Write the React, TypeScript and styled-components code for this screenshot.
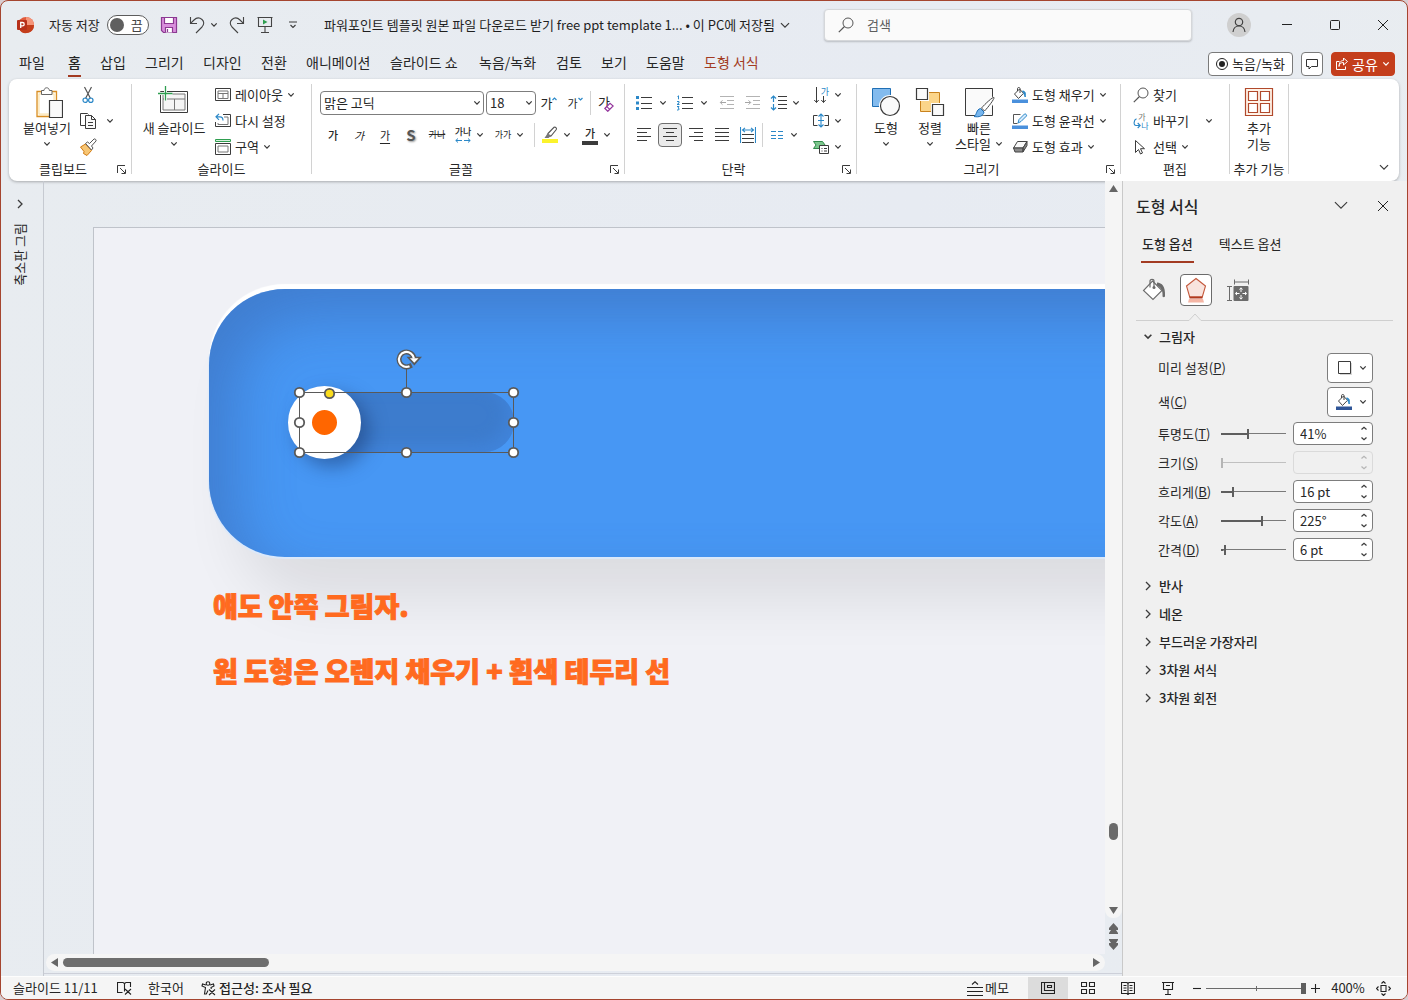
import React from "react";
import styled, { createGlobalStyle, css } from "styled-components";

const GlobalStyle = createGlobalStyle`
  * { box-sizing: border-box; }
  body {
    margin: 0;
    background: #d8cdd0;
    color: #262626;
    font-family: "Noto Sans CJK KR", "Noto Sans", sans-serif;
    font-size: 13px;
    line-height: 16px;
  }
  button, input, select {
    font: inherit;
    color: inherit;
    margin: 0;
    padding: 0;
    border: 0;
    background: none;
  }
  svg { display: block; flex: none; fill: none; }
`;

const INK = "#3b3b3b";
const BLUE = "#2b88c8";
const ACCENT = "#a33b22";

/* ---------- shared parts ---------- */

const AppWindow = styled.div`
  height: 100vh;
  min-height: 700px;
  display: grid;
  grid-template-rows: 48px 30px auto 1fr 23px;
  border: 1px solid #a5452f;
  border-radius: 8px;
  overflow: hidden;
  background: linear-gradient(100deg, #e8ecf0 0%, #e7ebf2 60%, #e9edf0 100%);
`;

const Chevron = ({ size = 8, color = INK }: { size?: number; color?: string }) => (
  <svg width={size} height={size * 0.75} viewBox="0 0 8 6" aria-hidden="true">
    <path d="M1.3 1.4 4 4.1 6.7 1.4" stroke={color} strokeWidth={size > 14 ? 0.5 : size > 10 ? 0.8 : 1.3} />
  </svg>
);

const BareButton = styled.button<{ $w?: number; $h?: number }>`
  display: flex;
  align-items: center;
  justify-content: center;
  flex: none;
  width: ${(p) => (p.$w ? `${p.$w}px` : "auto")};
  height: ${(p) => p.$h ?? 24}px;
  border-radius: 4px;
`;

/* ---------- title bar ---------- */

const TitleBar = styled.header`
  display: flex;
  align-items: center;
`;

const QuickAccess = styled.div`
  display: flex;
  align-items: center;
  gap: 10px;
  flex: none;
  width: 323px;
  padding-left: 14px;
`;

const UndoGroup = styled.div`
  display: flex;
  align-items: center;
  gap: 4px;
`;

const AutoSave = styled.label`
  display: flex;
  align-items: center;
  gap: 7px;
  flex: none;
  width: 101px;
  margin-left: 4px;
  white-space: nowrap;
`;

const Toggle = styled.span`
  position: relative;
  width: 42px;
  height: 20px;
  border: 1px solid #5c5c5c;
  border-radius: 10px;
  background: #fff;
  display: flex;
  align-items: center;
  justify-content: flex-end;
  padding-right: 5px;
  color: #444;
  input {
    position: absolute;
    inset: 0;
    width: 100%;
    height: 100%;
    opacity: 0;
  }
  &::before {
    content: "";
    width: 14px;
    height: 14px;
    border-radius: 50%;
    background: #5f5f5f;
    margin-right: auto;
    margin-left: 2px;
  }
`;

const DocTitle = styled.div`
  flex: 0 0 500px;
  display: flex;
  align-items: center;
  gap: 4px;
  white-space: nowrap;
  color: #1f1f1f;
`;

const SearchBox = styled.label`
  flex: 1 1 200px;
  height: 32px;
  display: flex;
  align-items: center;
  gap: 13px;
  padding-left: 13px;
  margin-right: 35px;
  background: #fafafa;
  border: 1px solid #d5d7da;
  border-radius: 4px;
  box-shadow: 0 1px 2px rgba(0, 0, 0, 0.2);
  input {
    flex: 1;
    min-width: 0;
    outline: none;
  }
  input::placeholder {
    color: #5d5d5d;
    opacity: 1;
  }
`;

const Avatar = styled.button`
  width: 24px;
  height: 24px;
  border-radius: 50%;
  background: #cfcfcf;
  display: grid;
  place-items: center;
  flex: none;
  margin-right: 12px;
`;

/* ---------- ribbon tabs ---------- */

const TabRow = styled.nav`
  display: flex;
  align-items: flex-start;
  padding: 3px 12px 0 18px;
`;

const TabList = styled.div`
  display: flex;
  gap: 19px;
  flex: 1;
`;

const Tab = styled.button<{ $w: number; $active?: boolean; $accent?: boolean }>`
  flex: none;
  min-width: ${(p) => p.$w}px;
  height: 25px;
  text-align: left;
  white-space: nowrap;
  font-size: 14px;
  line-height: 20px;
  padding-bottom: 3px;
  color: ${(p) => (p.$accent ? ACCENT : "#262626")};
  font-weight: ${(p) => (p.$active ? 500 : 400)};
  border-bottom: 2px solid ${(p) => (p.$active ? ACCENT : "transparent")};
  &:first-child {
    margin-right: 4px;
  }
`;

const TabActions = styled.div`
  display: flex;
  gap: 8px;
`;

const ActionButton = styled.button<{ $w: number; $primary?: boolean }>`
  width: ${(p) => p.$w}px;
  height: 24px;
  display: flex;
  align-items: center;
  justify-content: center;
  gap: 4px;
  white-space: nowrap;
  border: 1px solid ${(p) => (p.$primary ? "#c43e1c" : "#7a7a7a")};
  border-radius: 4px;
  background: ${(p) => (p.$primary ? "#c43e1c" : "#fff")};
  color: ${(p) => (p.$primary ? "#fff" : "#262626")};
  font-size: ${(p) => (p.$primary ? 14 : 13)}px;
`;

/* ---------- ribbon ---------- */

const Ribbon = styled.section`
  display: flex;
  height: 102px;
  margin: 0 8px;
  background: #fff;
  border-radius: 8px;
  box-shadow: 0 1px 3px rgba(0, 0, 0, 0.28);
`;

const GroupBox = styled.div<{ $w: number }>`
  flex: none;
  width: ${(p) => p.$w}px;
  padding-top: 3px;
  display: grid;
  grid-template-rows: 78px 18px;
`;

const GroupBody = styled.div<{ $pad?: number }>`
  display: flex;
  padding-left: ${(p) => p.$pad ?? 0}px;
`;

const GroupCaption = styled.div<{ $launcher?: boolean }>`
  display: grid;
  grid-template-columns: ${(p) => (p.$launcher ? "1fr 14px" : "1fr")};
  align-items: center;
  text-align: center;
  white-space: nowrap;
  button {
    width: 9px;
    display: grid;
    place-items: center;
  }
`;

const GroupRule = styled.div`
  flex: none;
  width: 1px;
  margin: 5px 0 7px;
  background: #d2d2d2;
`;

const LineRule = styled.div<{ $gap?: number }>`
  flex: none;
  width: 1px;
  height: 24px;
  margin: 0 ${(p) => p.$gap ?? 2}px;
  background: #d2d2d2;
`;

const BigButton = styled.button<{ $w: number }>`
  flex: none;
  width: ${(p) => p.$w}px;
  padding-top: 4px;
  display: flex;
  flex-direction: column;
  align-items: center;
  gap: 2px;
  white-space: nowrap;
`;

const BigCaption = styled.span`
  display: flex;
  flex-direction: column;
  align-items: center;
  > svg {
    margin-top: 5px;
  }
`;

const TwoLineCaption = styled.span`
  white-space: pre-line;
  text-align: center;
  svg {
    display: inline-block;
    margin-left: 4px;
    vertical-align: 2px;
  }
`;

const Stack = styled.div<{ $left?: number }>`
  display: flex;
  flex-direction: column;
  margin-left: ${(p) => p.$left ?? 0}px;
`;

const RowButton = styled.button`
  height: 26px;
  display: flex;
  align-items: center;
  white-space: nowrap;
  gap: 4px;
`;

const Lines = styled.div`
  display: flex;
  flex-direction: column;
  gap: 8px;
  padding-top: 9px;
`;

const Line = styled.div<{ $gap?: number }>`
  display: flex;
  align-items: center;
  height: 24px;
  gap: ${(p) => p.$gap ?? 0}px;
`;

const SplitBox = styled.button<{ $slot: number; $after: number }>`
  flex: none;
  height: 24px;
  display: grid;
  grid-template-columns: 26px ${(p) => p.$slot}px;
  place-items: center;
  margin-right: ${(p) => p.$after}px;
`;

const ToolButton = styled(BareButton)<{ $selected?: boolean }>`
  width: 26px;
  ${(p) =>
    p.$selected &&
    css`
      width: 24px;
      margin: 0 1px;
      border: 1px solid #6f6f6f;
      background: #ebebeb;
    `}
`;

const Glyph = styled.span<{ $kind?: "bold" | "italic" | "under" | "strike" | "shadow" | "large" }>`
  font-size: ${(p) => (p.$kind === "large" ? 13 : p.$kind === "shadow" ? 15 : p.$kind === "strike" ? 9 : 11)}px;
  font-weight: ${(p) => (p.$kind === "bold" ? 500 : p.$kind === "shadow" ? 700 : 400)};
  font-style: ${(p) => (p.$kind === "italic" ? "italic" : "normal")};
  text-decoration: ${(p) => (p.$kind === "under" ? "underline" : p.$kind === "strike" ? "line-through" : "none")};
  text-underline-offset: 3px;
  text-shadow: ${(p) => (p.$kind === "shadow" ? "1px 1px 2px #999" : "none")};
  color: ${(p) => (p.$kind === "shadow" ? "#555" : "inherit")};
  line-height: 14px;
  white-space: nowrap;
`;

const TinyGlyph = styled.span<{ $strong?: boolean }>`
  font-size: 9px;
  line-height: 10px;
  font-weight: ${(p) => (p.$strong ? 500 : 400)};
  white-space: nowrap;
`;

const MarkedGlyph = styled.span`
  display: flex;
  align-items: flex-start;
  svg {
    margin-top: 1px;
  }
`;

const ErasedGlyph = styled.span`
  display: grid;
  width: 16px;
  height: 17px;
  > * {
    grid-area: 1 / 1;
    justify-self: start;
  }
  svg {
    place-self: end;
  }
`;

const StackedGlyph = styled.span`
  display: flex;
  flex-direction: column;
  align-items: center;
  gap: 1px;
`;

const IconSplit = styled.span`
  display: grid;
  grid-template-columns: 26px 8px;
  place-items: center;
`;

const WideGap = styled.span`
  width: 8px;
`;

const Combo = styled.label<{ $w: number }>`
  flex: none;
  width: ${(p) => p.$w}px;
  height: 24px;
  display: grid;
  align-items: center;
  border: 1px solid #7d7d7d;
  border-radius: 4px;
  background: #fff;
  select {
    grid-area: 1 / 1;
    width: 100%;
    height: 22px;
    padding-left: 3px;
    appearance: none;
    outline: none;
  }
  svg {
    grid-area: 1 / 1;
    justify-self: end;
    margin-right: 2px;
    pointer-events: none;
  }
`;

const CollapseCell = styled.div`
  flex: 1;
  display: flex;
  justify-content: flex-end;
  align-items: flex-end;
  padding: 0 9px 9px 0;
`;

const Split = ({
  label,
  slot = 8,
  after = 0,
  children,
}: {
  label: string;
  slot?: number;
  after?: number;
  children: React.ReactNode;
}) => (
  <SplitBox aria-label={label} $slot={slot} $after={after}>
    {children}
    <Chevron />
  </SplitBox>
);

const Launcher = () => (
  <svg width="9" height="9" viewBox="0 0 9 9" aria-hidden="true">
    <path d="M.5 8V.5H8M3 3l5 5M8.500 4.500v4H4.500" stroke={INK} />
  </svg>
);

const Group = ({
  w,
  caption,
  launcher,
  pad,
  children,
}: {
  w: number;
  caption: string;
  launcher?: boolean;
  pad?: number;
  children: React.ReactNode;
}) => (
  <>
    <GroupBox $w={w}>
      <GroupBody $pad={pad}>{children}</GroupBody>
      <GroupCaption $launcher={launcher}>
        <span>{caption}</span>
        {launcher && (
          <button aria-label={`${caption} 옵션`}>
            <Launcher />
          </button>
        )}
      </GroupCaption>
    </GroupBox>
    <GroupRule />
  </>
);

/* ---------- icons ---------- */

const LogoIcon = () => (
  <svg width="20" height="20" viewBox="0 0 20 20" aria-hidden="true">
    <circle cx="11" cy="10" r="8" fill="#e0593a" />
    <path d="M11 2a8 8 0 0 1 8 8h-8z" fill="#f5957a" />
    <path d="M19 10a8 8 0 0 1-15 4l7-4z" fill="#c43e1c" />
    <rect x="2" y="5" width="10" height="10" rx="1" fill="#b7301a" />
    <path d="M5.700 13V7.500h1.800a1.600 1.600 0 0 1 0 3.400H5.700" stroke="#fff" strokeWidth="1.300" />
  </svg>
);

const SaveIcon = () => (
  <svg width="18" height="18" viewBox="0 0 18 18" aria-hidden="true">
    <path d="M1.500 1.500h15v15h-13l-2-2z" fill="#d98fdc" stroke="#8c3a92" strokeWidth="1.200" />
    <path d="M4.500 1.500h9v6h-9zM5.500 16.500v-5h7v5" fill="#fff" stroke="#8c3a92" strokeWidth="1.200" />
    <path d="M7.500 13v3" stroke="#8c3a92" strokeWidth="1.200" />
  </svg>
);

const UndoIcon = ({ flip }: { flip?: boolean }) => (
  <svg width="18" height="18" viewBox="0 0 18 18" aria-hidden="true">
    <path
      d={
        flip
          ? "M15.500 1v6.500H9M15.200 7.200 12 4C9.500 1.500 6.300 1.500 4 3.500s-2.300 5 0 7.500l6 6"
          : "M2.500 1v6.500H9M2.800 7.200 6 4c2.500-2.500 5.700-2.500 8-.5s2.300 5 0 7.500l-6 6"
      }
      stroke="#444"
      strokeWidth="1.100"
    />
  </svg>
);

const PresentIcon = () => (
  <svg width="16" height="18" viewBox="0 0 16 18" aria-hidden="true">
    <path d="M.5 1.500h15M1.500 1.500v9h13v-9M8 10.500V16M4 16.500h8" stroke="#444" strokeWidth="1.100" />
    <path d="M6 3.500 10.500 6 6 8.500z" fill="#2f9e50" />
  </svg>
);

const MoreIcon = () => (
  <svg width="8" height="8" viewBox="0 0 8 8" aria-hidden="true">
    <path d="M0 1h8M1.500 4 4 6.500 6.500 4" stroke={INK} strokeWidth="1.100" />
  </svg>
);

const SearchIcon = ({ size = 16 }: { size?: number }) => (
  <svg width={size} height={size} viewBox="0 0 16 16" aria-hidden="true">
    <circle cx="10" cy="6" r="5" stroke="#555" />
    <path d="M6.500 9.500.8 15.200" stroke="#555" strokeWidth="1.200" />
  </svg>
);

const PersonIcon = () => (
  <svg width="16" height="16" viewBox="0 0 16 16" aria-hidden="true">
    <circle cx="8" cy="5" r="3.700" stroke="#444" strokeWidth="1.200" />
    <path d="M2 15c.4-3.800 2.800-6 6-6s5.600 2.200 6 6" stroke="#444" strokeWidth="1.200" />
  </svg>
);

const MinimizeIcon = () => (
  <svg width="10" height="10" viewBox="0 0 10 10" aria-hidden="true">
    <path d="M0 4.500h10" stroke="#222" />
  </svg>
);

const MaximizeIcon = () => (
  <svg width="10" height="10" viewBox="0 0 10 10" aria-hidden="true">
    <rect x=".5" y=".5" width="9" height="9" rx="1" stroke="#222" />
  </svg>
);

const CloseIcon = () => (
  <svg width="10" height="10" viewBox="0 0 10 10" aria-hidden="true">
    <path d="m0 0 10 10M10 0 0 10" stroke="#222" />
  </svg>
);

const RecordIcon = () => (
  <svg width="12" height="12" viewBox="0 0 12 12" aria-hidden="true">
    <circle cx="6" cy="6" r="5.500" stroke="#222" />
    <circle cx="6" cy="6" r="3" fill="#222" />
  </svg>
);

const CommentIcon = () => (
  <svg width="12" height="12" viewBox="0 0 12 12" aria-hidden="true">
    <path d="M.5 1.500h11v7h-6l-2.500 2.500v-2.500H.5z" stroke="#333" />
  </svg>
);

const ShareIcon = () => (
  <svg width="12" height="12" viewBox="0 0 12 12" aria-hidden="true">
    <path d="M3.500 3.500h-3v8h9v-3M3 8.500c.4-3 2-4 4.500-4V7l4-3.500-4-3.500v2.500C4.500 2.500 3 5 3 8.500z" stroke="#fff" />
  </svg>
);

const PasteIcon = () => (
  <svg width="32" height="32" viewBox="0 0 32 32" aria-hidden="true">
    <path d="M6 5.500h19.500v25H6z" fill="#fff7e3" stroke="#d98e23" strokeWidth="1.300" />
    <path d="M8 8h15v20H8z" fill="#fff" stroke="#fbe0a6" />
    <path d="M10.500 8.500v-4h2.500c.3-2 1.300-2.700 2.700-2.700s2.400.7 2.700 2.700H21v4z" fill="#fff" stroke="#666" />
    <path d="M18.500 14.500h13v17h-13z" fill="#fafafa" stroke={INK} strokeWidth="1.200" />
  </svg>
);

const CutIcon = () => (
  <svg width="20" height="20" viewBox="0 0 20 20" aria-hidden="true">
    <path d="M6.500 2 12.500 13.500M13.500 2 7.500 13.500" stroke="#555" strokeWidth="1.200" />
    <circle cx="7.200" cy="15.200" r="2.200" stroke={BLUE} strokeWidth="1.200" />
    <circle cx="12.800" cy="15.200" r="2.200" stroke={BLUE} strokeWidth="1.200" />
  </svg>
);

const CopyIcon = () => (
  <svg width="20" height="20" viewBox="0 0 20 20" aria-hidden="true">
    <path d="M7.500 14.500h-5v-12h7l1 1" stroke={INK} />
    <path d="M7.500 4.500h6l4 4v9h-10z" fill="#fafafa" stroke={INK} />
    <path d="M13.500 4.500v4h4M10 11.500h5M10 14.500h5" stroke={INK} />
  </svg>
);

const PainterIcon = () => (
  <svg width="20" height="20" viewBox="0 0 20 20" aria-hidden="true">
    <path d="m2.500 10 5-3 6 6.500-4.500 5-3.500-2 .5-2z" fill="#f7c675" stroke="#d07a12" />
    <path d="m7.500 6.500 6 6.500 1.500-2-1.500-2 4.500-5c.7-1-1-2.600-2-2l-4.500 4.500-2-1.500z" fill="#fff" stroke="#555" />
  </svg>
);

const NewSlideIcon = () => (
  <svg width="32" height="32" viewBox="0 0 32 32" aria-hidden="true">
    <path d="M2.500 5.500h27v21h-27z" fill="#fff" stroke={INK} />
    <path d="M5 8h22v16H5zM5 13h22M16.500 13v11" fill="#f5f5f5" stroke="#777" />
    <path d="M7.500 0v14.500M0 7.500h14.500" stroke="#fff" strokeWidth="3" />
    <path d="M7.500 0v14.500M0 7.500h14.500" stroke="#2f9e50" strokeWidth="1.300" />
  </svg>
);

const LayoutIcon = () => (
  <svg width="16" height="16" viewBox="0 0 16 16" aria-hidden="true">
    <path d="M.5 1.500h15v12H.5z" stroke={INK} />
    <path d="M3 4h10v7.500H3zM3 6.500h10M8 6.500v5" stroke="#777" />
  </svg>
);

const ResetIcon = () => (
  <svg width="16" height="16" viewBox="0 0 16 16" aria-hidden="true">
    <path d="M8 1.500h7.500v12H.5V9" stroke={INK} />
    <path d="M9 4h4v7.500H3V10" stroke="#777" />
    <path d="M4 .8 1 3.800l3 3M1.200 3.800H5c2 0 3 1 3 3.700" stroke={BLUE} strokeWidth="1.200" />
  </svg>
);

const SectionIcon = () => (
  <svg width="16" height="16" viewBox="0 0 16 16" aria-hidden="true">
    <path d="M.5.5h15v2H.5z" fill="#d6f0dc" stroke="#2f9e50" />
    <path d="M.5 4.500h15v11H.5z" stroke={INK} />
    <path d="M3 7h10v6H3z" stroke="#777" />
  </svg>
);

const UpMark = () => (
  <svg width="5" height="4" viewBox="0 0 5 4" aria-hidden="true">
    <path d="M.5 3 2.500 1l2 2" stroke={BLUE} strokeWidth="1.200" />
  </svg>
);

const DownMark = () => (
  <svg width="5" height="4" viewBox="0 0 5 4" aria-hidden="true">
    <path d="m.5 1 2 2 2-2" stroke={BLUE} strokeWidth="1.200" />
  </svg>
);

const Eraser = () => (
  <svg width="10" height="10" viewBox="0 0 10 10" aria-hidden="true">
    <path d="M.8 6.500 6 1.300 9.200 4 3.800 9.300z" fill="#fff" stroke="#93359c" strokeWidth="1.200" />
    <path d="M2.800 4.600 5.800 7.400" stroke="#93359c" strokeWidth="1.200" />
  </svg>
);

const SpreadArrow = () => (
  <svg width="16" height="5" viewBox="0 0 16 5" aria-hidden="true">
    <path d="M7 2.500H.8M3 .5l-2.200 2L3 4.500M9 2.500h6.200M13 .5l2.200 2-2.200 2" stroke={BLUE} />
  </svg>
);

const HighlightIcon = () => (
  <svg width="18" height="18" viewBox="0 0 18 18" aria-hidden="true">
    <path d="M1 13h16v4H1z" fill="#fbf32c" />
    <path d="m7 7.500 6-6.200c1.500-.6 3 .8 2.300 2.200L10 10l-2 .5-1.500-1.500z" fill="#fff" stroke="#555" strokeWidth="1.100" />
    <path d="m6.500 7.500-3 4.500h4l3-2.500z" fill="#777" />
  </svg>
);

const InkBar = styled.span`
  width: 16px;
  height: 4px;
  background: #3b3b3b;
`;

const textLines = (rows: [number, number, number][], color = INK) =>
  rows.map(([x1, x2, y]) => (
    <path key={`${x1}-${y}`} d={`M${x1} ${y}H${x2}`} stroke={color} shapeRendering="crispEdges" />
  ));

const BulletIcon = () => (
  <svg width="18" height="16" viewBox="0 0 18 16" aria-hidden="true">
    <path d="M1 1h3v3H1zM1 6.500h3v3H1zM1 12h3v3H1z" fill={BLUE} />
    {textLines([[6, 17, 2.5], [6, 17, 8.5], [6, 17, 13.5]])}
  </svg>
);

const NumberIcon = () => (
  <svg width="18" height="16" viewBox="0 0 18 16" aria-hidden="true">
    <path d="M1.500 1.500 2.500.8v3.500M1 6.500h2V8l-2 1.500h2.500M1 11.500h2L2 13l1.200.8L2.500 15H1" stroke={BLUE} />
    {textLines([[6, 17, 2.5], [6, 17, 8.5], [6, 17, 13.5]])}
  </svg>
);

const IndentIcon = ({ out }: { out?: boolean }) => (
  <svg width="16" height="14" viewBox="0 0 16 14" aria-hidden="true">
    {textLines([[1, 15, 0.5], [8, 15, 4.5], [8, 15, 8.5], [1, 15, 12.5]], "#b3b3b3")}
    <path d={out ? "M7 6.500H1.500M3.500 4.300 1.300 6.500l2.200 2.200" : "M0 6.500h5.500M3.500 4.300 5.700 6.500 3.500 8.700"} stroke="#a5a5a5" />
  </svg>
);

const SpacingIcon = () => (
  <svg width="18" height="16" viewBox="0 0 18 16" aria-hidden="true">
    <path d="M3.500 1v14M1 3.500 3.500 1 6 3.500M1 12.500 3.500 15 6 12.500" stroke={BLUE} strokeWidth="1.200" />
    <path d="M0 8h7" stroke="#fff" strokeWidth="2" />
    {textLines([[8, 17, 1.5], [8, 17, 5.5], [8, 17, 9.5], [8, 17, 13.5]])}
  </svg>
);

const AlignIcon = ({ kind }: { kind: "left" | "center" | "right" | "full" }) => {
  const short: Record<string, [number, number]> = { left: [0, 10], center: [3, 11], right: [5, 14], full: [0, 14] };
  const [a, b] = short[kind];
  return (
    <svg width="14" height="14" viewBox="0 0 14 14" aria-hidden="true">
      {textLines([[0, 14, 0.5], [a, b, 4.5], [0, 14, 8.5], [a, b, 12.5]])}
    </svg>
  );
};

const DistributeIcon = () => (
  <svg width="16" height="16" viewBox="0 0 16 16" aria-hidden="true">
    <path d="M.5 0v16M15.500 0v16M2.500 3h11M5 .8 2.500 3 5 5.200M11 .8 13.500 3 11 5.200" stroke={BLUE} strokeWidth="1.100" />
    {textLines([[2, 14, 7.5], [2, 14, 11.5], [2, 14, 15.5]])}
  </svg>
);

const ColumnsIcon = () => (
  <svg width="14" height="10" viewBox="0 0 14 10" aria-hidden="true">
    {textLines([[1, 6, 1.5], [8, 13, 1.5], [1, 6, 5.5], [8, 13, 5.5], [1, 6, 8.5], [8, 13, 8.5]], BLUE)}
  </svg>
);

const DirectionBox = styled.span`
  display: grid;
  width: 16px;
  height: 17px;
  color: #2b88c8;
  font-size: 9px;
  line-height: 9px;
  > * {
    grid-area: 1 / 1;
  }
  span {
    place-self: start end;
  }
`;

const DirectionArrows = () => (
  <svg width="14" height="17" viewBox="0 0 14 17" aria-hidden="true">
    <path d="M3.500 0v15.500M1.300 13l2.200 2.500L5.700 13M10.500 9v6.500M8.300 13l2.200 2.500 2.200-2.500" stroke={INK} />
  </svg>
);

const AlignTextIcon = () => (
  <svg width="16" height="16" viewBox="0 0 16 16" aria-hidden="true">
    <path d="M4.500 2.500h-4v10h4M11.500 2.500h4v10h-4" stroke={INK} />
    <path d="M8 1v13M5.500 3.500 8 1l2.500 2.500M5.500 11.500 8 14l2.500-2.500M5 7.500h6" stroke={BLUE} strokeWidth="1.100" />
  </svg>
);

const SmartArtIcon = () => (
  <svg width="16" height="14" viewBox="0 0 16 14" aria-hidden="true">
    <path d="M.5 1.500h9L12 5 9.500 8.500h-9L3 5z" fill="#7cc68d" stroke="#2f8a4a" />
    <path d="M6.500 5.500h9v8h-9z" fill="#fff" stroke={INK} />
    <path d="M8.500 8.500h1M11 8.500h3M8.500 11h1M11 11h3" stroke={INK} />
  </svg>
);

const ShapesIcon = () => (
  <svg width="32" height="32" viewBox="0 0 32 32" aria-hidden="true">
    <path d="M2.500 2.500h18v18h-18z" fill="#83bbee" stroke="#1f6fb5" />
    <circle cx="20" cy="20" r="11" fill="#fff" />
    <circle cx="20" cy="20" r="9.500" fill="#fafafa" stroke={INK} strokeWidth="1.200" />
  </svg>
);

const ArrangeIcon = () => (
  <svg width="32" height="32" viewBox="0 0 32 32" aria-hidden="true">
    <path d="M6.500 6.500h19v19h-19z" fill="#fbd58a" stroke="#c9821d" />
    <path d="M1 1h14v14H1zM17 17h14v14H17z" fill="#fff" />
    <path d="M2.500 2.500h11v11h-11zM18.500 18.500h11v11h-11z" fill="#fafafa" stroke={INK} strokeWidth="1.200" />
  </svg>
);

const QuickStyleIcon = () => (
  <svg width="32" height="32" viewBox="0 0 32 32" aria-hidden="true">
    <path d="M2.500 2.500h27v27h-27z" fill="#fafafa" stroke={INK} />
    <path d="M30.500 10 18 22l-6 8 12-1 8-14z" fill="#fff" />
    <path d="M31 11.500c.8 1-6 10-9.500 13.500L18.500 22C22 18 30 10.500 31 11.500z" fill="#fff" stroke="#444" />
    <path d="M17.500 22.500 21 26c-.5 4-5 5.500-10 4.500 3-1.500 2-7 6.500-8z" fill="#77b6ee" stroke="#1f6fb5" />
  </svg>
);

const FillIcon = ({ bar = "#4a90dc" }: { bar?: string }) => (
  <svg width="16" height="16" viewBox="0 0 16 16" aria-hidden="true">
    <path d="M7.500 2 2.500 7l4 4.500 5-5.200zM5.500 4V1.500c0-1.300 2.500-1.300 2.500 0V6" fill="#fff" stroke="#444" />
    <path d="M10.500 4c2.500 0 3.500 2 2.700 6C12 8 12.500 6 10.500 4z" fill={BLUE} stroke={BLUE} />
    <path d="M0 12.500h16V16H0z" fill={bar} />
  </svg>
);

const OutlineIcon = () => (
  <svg width="16" height="16" viewBox="0 0 16 16" aria-hidden="true">
    <path d="M8.500 1.500h-7v9h4" stroke="#555" />
    <path d="m6 10 1-3.500 5.500-5.500c1-.6 2.600 1 2 2L9 8.500z" fill="#d6eafc" stroke={BLUE} />
    <path d="M0 12.500h16V16H0z" fill="#4a90dc" />
  </svg>
);

const EffectIcon = () => (
  <svg width="16" height="16" viewBox="0 0 16 16" aria-hidden="true">
    <path d="M5.500 2.500h9.500L11 9H1.500z" fill="#fafafa" stroke="#444" />
    <path d="M15 2.500v4L11 13V9zM1.500 9H11v4H3z" fill="#8b8b8b" stroke="#444" />
  </svg>
);

const ReplaceIconBox = styled.span`
  width: 16px;
  height: 18px;
  display: grid;
  grid-template-columns: 5px 3px 5px 3px;
  grid-template-rows: 9px 9px;
  font-size: 8px;
  line-height: 9px;
  color: #777;
  b {
    grid-area: 1 / 2 / 2 / 4;
    font-weight: 400;
  }
  svg {
    grid-area: 2 / 1 / 3 / 3;
    margin-top: -3px;
  }
  em {
    grid-area: 2 / 3 / 3 / 5;
    font-style: normal;
    color: #2b88c8;
  }
`;

const ReplaceArrow = () => (
  <svg width="8" height="11" viewBox="0 0 8 11" aria-hidden="true">
    <path d="M3.500.8C.5 2 .3 7.500 3 7.500h4M4.700 5 7.200 7.500 4.700 10" stroke={BLUE} strokeWidth="1.100" />
  </svg>
);

const PointerIcon = () => (
  <svg width="16" height="16" viewBox="0 0 16 16" aria-hidden="true">
    <path d="M2.500 1.500v12l3-3 2 4.500 2-1-2-4.300h4z" fill="#fff" stroke={INK} />
  </svg>
);

const AddInIcon = () => (
  <svg width="32" height="32" viewBox="0 0 32 32" aria-hidden="true">
    <path d="M2.500 2.500h27v27h-27z" fill="#fff3e8" stroke="#b1492c" strokeWidth="1.200" />
    <path
      d="M5.500 5.500h9v9h-9zM17.500 5.500h9v9h-9zM5.500 17.500h9v9h-9zM17.500 17.500h9v9h-9z"
      fill="#fff"
      stroke="#b1492c"
      strokeWidth="1.200"
    />
  </svg>
);

/* ---------- workspace ---------- */

const Workspace = styled.main`
  display: grid;
  grid-template-columns: 43px minmax(0, 1fr) 285px;
  min-height: 0;
`;

const ThumbRail = styled.aside`
  display: flex;
  flex-direction: column;
  align-items: center;
  gap: 14px;
  padding: 18px 4px 0 0;
  border-right: 1px solid #c6cad1;
`;

const RailText = styled.span`
  writing-mode: vertical-rl;
  text-orientation: sideways;
  transform: rotate(180deg);
  line-height: 16px;
`;

const EditorGrid = styled.section`
  display: grid;
  grid-template-columns: minmax(0, 1fr) 17px;
  grid-template-rows: minmax(0, 1fr) 17px;
  margin-bottom: 2px;
  padding-bottom: 2px;
  border-bottom: 1px solid #cdd0d9;
  min-height: 0;
`;

const Canvas = styled.div`
  padding: 46px 0 0 49px;
  min-height: 0;
`;

const Slide = styled.div`
  position: relative;
  height: 100%;
  overflow: hidden;
  border: solid #bfc3ca;
  border-width: 1px 0 0 1px;
  background: #f0f1f6;
`;

const BluePanel = styled.div`
  position: absolute;
  left: 115px;
  top: 61px;
  right: -160px;
  height: 268px;
  border-radius: 76px;
  background: #4797f4;
  box-shadow:
    inset 26px 28px 56px rgba(56, 96, 166, 0.46),
    0 -5px 1px #ffffff,
    0 1px 1px 1px #dbe9fb,
    30px 42px 56px rgba(0, 0, 0, 0.085);
`;

const SwitchTrack = styled.div`
  position: absolute;
  left: 205px;
  top: 164px;
  width: 215px;
  height: 60px;
  border-radius: 30px;
  background: #3d7ccd;
  box-shadow: inset -7px -7px 16px rgba(66, 136, 226, 0.6);
`;

const SwitchKnob = styled.div`
  position: absolute;
  left: 194px;
  top: 158px;
  width: 73px;
  height: 73px;
  border: 24px solid #fff;
  border-radius: 50%;
  background: #ff6600;
  box-shadow: 8px 8px 18px rgba(25, 55, 110, 0.5);
`;

const Selection = styled.svg`
  position: absolute;
  left: 196px;
  top: 118px;
`;

const Note = styled.p<{ $top: number }>`
  position: absolute;
  left: 119px;
  top: ${(p) => p.$top}px;
  margin: 0;
  color: #ff6a1f;
  font-size: 27px;
  line-height: 40px;
  font-weight: 900;
  white-space: nowrap;
  -webkit-text-stroke: 1px #ff6a1f;
`;

const VBar = styled.div`
  display: flex;
  flex-direction: column;
  align-items: center;
  gap: 5px;
  padding-bottom: 4px;
`;

const VTrack = styled.div`
  flex: 1;
  width: 17px;
  display: flex;
  flex-direction: column;
  justify-content: space-between;
  align-items: center;
  padding: 3px 0;
  border-radius: 0 0 8px 8px;
  background: #f5f5f5;
`;

const VThumb = styled.div`
  width: 9px;
  height: 17px;
  border-radius: 5px;
  margin: auto 0 66px;
  background: #6b6b6b;
`;

const HTrack = styled.div`
  display: flex;
  align-items: center;
  gap: 4px;
  margin-left: 2px;
  padding: 0 4px;
  border-radius: 9px;
  background: #f5f5f5;
`;

const HThumb = styled.div`
  width: 206px;
  height: 9px;
  border-radius: 5px;
  margin-right: auto;
  background: #6e6e6e;
`;

const Triangle = ({ dir }: { dir: "up" | "down" | "left" | "right" }) => {
  const d = { up: "M0 8h9L4.500 1z", down: "M0 1h9L4.500 8z", left: "M8 0v9L1 4.500z", right: "M1 0v9l7-4.500z" }[dir];
  return (
    <svg width="9" height="9" viewBox="0 0 9 9" aria-hidden="true">
      <path d={d} fill="#666" />
    </svg>
  );
};

const DoubleArrow = ({ down }: { down?: boolean }) => (
  <svg width="9" height="11" viewBox="0 0 9 11" aria-hidden="true">
    <path
      d={down ? "M0 0h9v1L7 4h2v2l-4.500 5L0 6V4h2L0 1z" : "M0 11h9v-1L7 7h2V5L4.500 0 0 5v2h2L0 10z"}
      fill="#666"
    />
  </svg>
);

const handles: [number, number][] = [
  [9.5, 46.5], [116.5, 46.5], [223.5, 46.5], [9.5, 76.5], [223.5, 76.5], [9.5, 106.5], [116.5, 106.5], [223.5, 106.5],
];

const SelectionFrame = () => (
  <Selection width="236" height="116" viewBox="0 0 236 116" aria-hidden="true">
    <path d="M9.500 46.500h214v60H9.500zM116.500 22v24" stroke="#595959" />
    {handles.map(([x, y]) => (
      <circle key={`${x}-${y}`} cx={x} cy={y} r="4.700" fill="#fff" stroke="#595959" strokeWidth="1.800" />
    ))}
    <circle cx="39.500" cy="47.500" r="4.700" fill="#fadc1c" stroke="#595959" strokeWidth="1.800" />
    <path d="M119.500 20.300A7.500 7.500 0 1 1 123.900 12" stroke="#595959" strokeWidth="5" strokeLinecap="square" />
    <path d="M116.500 10.800h15.500l-7.700 8.700z" fill="#595959" />
    <path d="M119.500 20.300A7.500 7.500 0 1 1 123.900 12.500" stroke="#fff" strokeWidth="2.200" />
    <path d="M120 12.300h8.500l-4.200 4.500z" fill="#fff" />
  </Selection>
);

/* ---------- format panel ---------- */

const Panel = styled.aside`
  background: #f0f0f0;
  border-left: 1px solid #c9c9c9;
  padding: 14px 14px 0 13px;
`;

const PanelHead = styled.div`
  display: flex;
  align-items: center;
  gap: 12px;
  h2 {
    flex: 1;
    margin: 0;
    font-size: 16px;
    line-height: 22px;
    font-weight: 500;
  }
`;

const PanelTabs = styled.div`
  display: flex;
  gap: 24px;
  padding: 19px 0 0 5px;
`;

const PanelTab = styled.button<{ $active?: boolean }>`
  height: 27px;
  padding: 0 1px 10px;
  white-space: nowrap;
  font-weight: ${(p) => (p.$active ? 500 : 400)};
  border-bottom: 2px solid ${(p) => (p.$active ? ACCENT : "transparent")};
`;

const PanelModes = styled.div`
  display: flex;
  gap: 10px;
  padding: 11px 0 7px 2px;
`;

const ModeButton = styled.button<{ $active?: boolean }>`
  width: 32px;
  height: 32px;
  display: grid;
  place-items: center;
  border-radius: 4px;
  border: 1px solid ${(p) => (p.$active ? "#6b6b6b" : "transparent")};
  background: ${(p) => (p.$active ? "#fff" : "transparent")};
`;

const CaretRule = styled.div`
  display: flex;
  align-items: flex-end;
  padding-bottom: 2px;
  &::before,
  &::after {
    content: "";
    height: 1px;
    background: #cfcfcf;
    width: 52px;
  }
  &::after {
    flex: 1;
  }
`;

const SectionHead = styled.button`
  display: flex;
  align-items: center;
  gap: 6px;
  height: 28px;
  padding-left: 7px;
  white-space: nowrap;
  font-weight: 500;
`;

const FieldRow = styled.div<{ $h?: number }>`
  display: grid;
  grid-template-columns: 63px 72px 80px;
  align-items: center;
  height: ${(p) => p.$h ?? 29}px;
  padding-left: 22px;
  label {
    white-space: nowrap;
  }
`;

const MenuButton = styled.button`
  grid-column: 3;
  justify-self: end;
  width: 46px;
  height: 30px;
  display: flex;
  align-items: center;
  justify-content: center;
  gap: 7px;
  padding-left: 3px;
  border: 1px solid #7d7d7d;
  border-radius: 4px;
  background: #fff;
`;

const Range = styled.input<{ $fill: number }>`
  appearance: none;
  width: 65px;
  height: 12px;
  background:
    linear-gradient(#5e5e5e, #5e5e5e) 0 5px / ${(p) => p.$fill}% 2px no-repeat,
    linear-gradient(#7a7a7a, #7a7a7a) 0 5px / 100% 1px no-repeat;
  &::-webkit-slider-thumb {
    appearance: none;
    width: 2px;
    height: 10px;
    background: #5e5e5e;
  }
  &:disabled {
    opacity: 0.4;
  }
`;

const SpinBox = styled.div<{ $off?: boolean }>`
  width: 80px;
  height: 23px;
  display: flex;
  align-items: center;
  padding: 0 4px 0 6px;
  border: 1px solid ${(p) => (p.$off ? "#dadada" : "#7d7d7d")};
  border-radius: 4px;
  background: ${(p) => (p.$off ? "transparent" : "#fff")};
  input {
    flex: 1;
    min-width: 0;
    outline: none;
  }
`;

const SpinArrows = ({ off }: { off?: boolean }) => (
  <svg width="8" height="17" viewBox="0 0 8 17" aria-hidden="true">
    <path d="M1.500 4.500 4 2.200l2.500 2.300M1.500 12.500 4 14.800l2.500-2.300" stroke={off ? "#b5b5b5" : INK} strokeWidth="1.200" />
  </svg>
);

const ClosedSections = styled.div`
  padding-top: 8px;
  display: flex;
  flex-direction: column;
  align-items: flex-start;
`;

const ChevronRight = ({ color = INK }: { color?: string }) => (
  <svg width="10" height="10" viewBox="0 0 10 10" aria-hidden="true">
    <path d="m3 1 4 4-4 4" stroke={color} strokeWidth="1.300" />
  </svg>
);

const BucketIcon = () => (
  <svg width="26" height="24" viewBox="0 0 26 24" aria-hidden="true">
    <path d="M16 4.500c5 .5 8.500 3.500 8 13.500-.2 1.500-1.500 1.500-2.500.5.5-5-1-9-5.500-11z" fill="#6b6b6b" />
    <path d="M11.500 3 21 12.500 12 21.500 2.500 12.500z" fill="#fff" stroke="#6b6b6b" strokeWidth="1.100" />
    <path d="M9 9.500V3c0-2.300 4-2.300 4 0v6" stroke="#6b6b6b" strokeWidth="1.200" />
    <circle cx="13" cy="9.500" r="1.500" fill="#6b6b6b" />
  </svg>
);

const PentagonIcon = () => (
  <svg width="22" height="26" viewBox="0 0 22 26" aria-hidden="true">
    <path d="M4 22h14l1 3.500H3z" fill="#f4b5a4" />
    <path d="M11 1.500 20.500 9l-3.200 11H4.700L1.500 9z" fill="#f8e4de" stroke="#c4583c" strokeWidth="1.100" />
    <path d="M4.500 20.500h13" stroke="#b1391d" strokeWidth="2" />
  </svg>
);

const SizeIcon = () => (
  <svg width="22" height="22" viewBox="0 0 22 22" aria-hidden="true">
    <rect x="6.500" y="7" width="15" height="15" rx="1" fill="#6b6b6b" />
    <path d="M7 3h15M7.500.500v5M21.500.500v5M2.500 7v14.500M0 7.500h5M0 21.500h5" stroke="#6b6b6b" />
    <path d="M14 9.500v3.500M14 16v3.500M9 14.500h3.500M15.500 14.500H19" stroke="#fff" />
    <path
      d="m12.500 10.500 1.500-1.700 1.500 1.700M12.500 18.500l1.500 1.700 1.500-1.700M10 13l-1.700 1.500L10 16M18 13l1.700 1.500L18 16"
      stroke="#fff"
    />
  </svg>
);

const CaretUp = () => (
  <svg width="14" height="8" viewBox="0 0 14 8" aria-hidden="true">
    <path d="M0 7.500h1L7 1l6 6.500h1" stroke="#cfcfcf" />
  </svg>
);

const SquareIcon = () => (
  <svg width="15" height="14" viewBox="0 0 15 14" aria-hidden="true">
    <path d="M3 2h12v12H3z" fill="#d6d6d6" />
    <path d="M1.500.500h12v12h-12z" fill="#fff" stroke={INK} />
  </svg>
);

const fields = [
  { id: "transparency", name: "투명도", keyName: "T", fill: 41, value: "41%" },
  { id: "size", name: "크기", keyName: "S", fill: 0, value: "", off: true },
  { id: "blur", name: "흐리게", keyName: "B", fill: 17, value: "16 pt" },
  { id: "angle", name: "각도", keyName: "A", fill: 63, value: "225°" },
  { id: "distance", name: "간격", keyName: "D", fill: 4, value: "6 pt" },
];

const AccessLabel = ({ id, name, keyName }: { id: string; name: string; keyName: string }) => (
  <label htmlFor={id}>
    {name}(<u>{keyName}</u>)
  </label>
);

const FormatPanel = () => (
  <Panel>
    <PanelHead>
      <h2>도형 서식</h2>
      <BareButton $w={40} $h={22} aria-label="작업 창 옵션">
        <Chevron size={18} />
      </BareButton>
      <BareButton $w={20} $h={22} aria-label="닫기">
        <CloseIcon />
      </BareButton>
    </PanelHead>
    <PanelTabs>
      <PanelTab $active>도형 옵션</PanelTab>
      <PanelTab>텍스트 옵션</PanelTab>
    </PanelTabs>
    <PanelModes>
      <ModeButton aria-label="채우기 및 선">
        <BucketIcon />
      </ModeButton>
      <ModeButton $active aria-label="효과">
        <PentagonIcon />
      </ModeButton>
      <ModeButton aria-label="크기 및 속성">
        <SizeIcon />
      </ModeButton>
    </PanelModes>
    <CaretRule>
      <CaretUp />
    </CaretRule>
    <SectionHead>
      <Chevron size={10} />
      그림자
    </SectionHead>
    <FieldRow $h={34}>
      <AccessLabel id="preset" name="미리 설정" keyName="P" />
      <MenuButton id="preset" aria-label="미리 설정">
        <SquareIcon />
        <Chevron />
      </MenuButton>
    </FieldRow>
    <FieldRow $h={34}>
      <AccessLabel id="color" name="색" keyName="C" />
      <MenuButton id="color" aria-label="색">
        <FillIcon bar="#2f5597" />
        <Chevron />
      </MenuButton>
    </FieldRow>
    {fields.map((f) => (
      <FieldRow key={f.id}>
        <AccessLabel id={f.id} name={f.name} keyName={f.keyName} />
        <Range type="range" aria-label={f.name} defaultValue={f.fill} $fill={f.fill} disabled={f.off} />
        <SpinBox $off={f.off}>
          <input id={f.id} type="text" defaultValue={f.value} disabled={f.off} />
          <SpinArrows off={f.off} />
        </SpinBox>
      </FieldRow>
    ))}
    <ClosedSections>
      {["반사", "네온", "부드러운 가장자리", "3차원 서식", "3차원 회전"].map((name) => (
        <SectionHead key={name}>
          <ChevronRight />
          {name}
        </SectionHead>
      ))}
    </ClosedSections>
  </Panel>
);

/* ---------- status bar ---------- */

const StatusBar = styled.footer`
  display: flex;
  align-items: center;
  padding: 0 13px 0 12px;
  background: #f5f5f5;
  border-top: 1px solid #fdfdfd;
  white-space: nowrap;
`;

const StatusText = styled.span<{ $w?: number; $strong?: boolean }>`
  flex: none;
  min-width: ${(p) => p.$w ?? 0}px;
  font-weight: ${(p) => (p.$strong ? 500 : 400)};
`;

const StatusIcon = styled.span<{ $w: number }>`
  width: ${(p) => p.$w}px;
`;

const Spacer = styled.span`
  flex: 1;
`;

const ViewButton = styled.button<{ $active?: boolean }>`
  width: 40px;
  height: 22px;
  display: grid;
  place-items: center;
  background: ${(p) => (p.$active ? "#dcdcdc" : "transparent")};
`;

const MemoButton = styled.button`
  display: flex;
  align-items: center;
  gap: 2px;
  width: 61px;
`;

const ZoomRange = styled.input`
  appearance: none;
  width: 100px;
  height: 14px;
  background:
    linear-gradient(#6b6b6b, #6b6b6b) center / 1px 5px no-repeat,
    linear-gradient(#6b6b6b, #6b6b6b) center / 100% 1px no-repeat;
  &::-webkit-slider-thumb {
    appearance: none;
    width: 5px;
    height: 11px;
    background: #5e5e5e;
  }
`;

const stroke = { stroke: "#222", strokeWidth: 1.1 };

const StatusStrip = () => (
  <StatusBar>
    <StatusText $w={104}>슬라이드 11/11</StatusText>
    <StatusIcon $w={31}>
      <svg width="15" height="14" viewBox="0 0 15 14" aria-hidden="true">
        <path d="M7.500 2.500v8M7.500 2.500 6 1.500H.5v10h5M7.500 2.500 9 1.500h4.500V6M8 8l6 5.500M14 8l-6 5.500" {...stroke} />
      </svg>
    </StatusIcon>
    <StatusText $w={53}>한국어</StatusText>
    <StatusIcon $w={18}>
      <svg width="15" height="15" viewBox="0 0 15 15" aria-hidden="true">
        <circle cx="7" cy="2.500" r="1.800" {...stroke} />
        <path
          d="M5 4 1.500 3 1 5l3.500 1.500L3.500 13h1.800L7 9.500M9 4l3.500-1 .5 2-3 1.500.3 1.500M8 8.500l6 5.500M14 8.500 8 14"
          {...stroke}
        />
      </svg>
    </StatusIcon>
    <StatusText $strong>접근성: 조사 필요</StatusText>
    <Spacer />
    <MemoButton>
      <svg width="16" height="15" viewBox="0 0 16 15" aria-hidden="true">
        <path d="M5 3.500 8 .8l3 2.700M0 6.500h16M0 10.500h16M0 14.500h16" {...stroke} />
      </svg>
      메모
    </MemoButton>
    <ViewButton $active aria-label="기본">
      <svg width="14" height="12" viewBox="0 0 14 12" aria-hidden="true">
        <path d="M.5.500h13v11H.5zM3.500.500v8h10M6.500 3.500h4v2h-4z" {...stroke} />
      </svg>
    </ViewButton>
    <ViewButton aria-label="여러 슬라이드">
      <svg width="14" height="12" viewBox="0 0 14 12" aria-hidden="true">
        <path d="M.5.500h5v4h-5zM8.500.500h5v4h-5zM.5 7.500h5v4h-5zM8.500 7.500h5v4h-5z" {...stroke} />
      </svg>
    </ViewButton>
    <ViewButton aria-label="읽기용 보기">
      <svg width="14" height="13" viewBox="0 0 14 13" aria-hidden="true">
        <path d="M7 1.500v10.500M7 1.500 6 .5H.5v11H6l1 1 1-1h5.500V.500H8z" {...stroke} />
        <path d="M2.500 3.500h3M2.500 6h3M2.500 8.500h3M8.500 3.500h3M8.500 6h3M8.500 8.500h3" {...stroke} />
      </svg>
    </ViewButton>
    <ViewButton aria-label="슬라이드 쇼">
      <svg width="12" height="13" viewBox="0 0 12 13" aria-hidden="true">
        <path d="M0 .500h12M1.500.500v7h9v-7M6 7.500v5M3 12.500h6M4 3.500h4" {...stroke} />
      </svg>
    </ViewButton>
    <BareButton $w={18} $h={20} aria-label="축소">
      <svg width="8" height="8" viewBox="0 0 8 8" aria-hidden="true">
        <path d="M0 4.500h8" {...stroke} />
      </svg>
    </BareButton>
    <ZoomRange type="range" aria-label="확대/축소" defaultValue={100} />
    <BareButton $w={18} $h={20} aria-label="확대">
      <svg width="9" height="9" viewBox="0 0 9 9" aria-hidden="true">
        <path d="M0 4.500h9M4.500 0v9" {...stroke} />
      </svg>
    </BareButton>
    <BareButton $w={48} $h={20}>400%</BareButton>
    <BareButton $w={22} $h={20} aria-label="창에 맞춤">
      <svg width="15" height="15" viewBox="0 0 15 15" aria-hidden="true">
        <path
          d="M5 4.500h5v6H5zM5.500 2.500l2-2 2 2M5.500 12.500l2 2 2-2M2.500 5.500l-2 2 2 2M12.500 5.500l2 2-2 2"
          {...stroke}
        />
      </svg>
    </BareButton>
  </StatusBar>
);

/* ---------- ribbon content ---------- */

const tabs: { name: string; w: number; active?: boolean; accent?: boolean }[] = [
  { name: "파일", w: 26 },
  { name: "홈", w: 13, active: true },
  { name: "삽입", w: 26 },
  { name: "그리기", w: 39 },
  { name: "디자인", w: 39 },
  { name: "전환", w: 26 },
  { name: "애니메이션", w: 65 },
  { name: "슬라이드 쇼", w: 70 },
  { name: "녹음/녹화", w: 58 },
  { name: "검토", w: 26 },
  { name: "보기", w: 26 },
  { name: "도움말", w: 39 },
  { name: "도형 서식", w: 56, accent: true },
];

const HomeRibbon = () => (
  <Ribbon aria-label="홈">
    <Group w={122} caption="클립보드" launcher pad={10}>
      <BigButton $w={56}>
        <PasteIcon />
        <BigCaption>
          붙여넣기
          <Chevron />
        </BigCaption>
      </BigButton>
      <Stack $left={3}>
        <RowButton aria-label="잘라내기"><CutIcon /></RowButton>
        <RowButton aria-label="복사">
          <CopyIcon />
          <Spacer />
          <Chevron />
        </RowButton>
        <RowButton aria-label="서식 복사"><PainterIcon /></RowButton>
      </Stack>
    </Group>
    <Group w={179} caption="슬라이드" pad={6}>
      <BigButton $w={72}>
        <NewSlideIcon />
        <BigCaption>
          새 슬라이드
          <Chevron />
        </BigCaption>
      </BigButton>
      <Stack $left={5}>
        <RowButton><LayoutIcon />레이아웃<Chevron /></RowButton>
        <RowButton><ResetIcon />다시 설정</RowButton>
        <RowButton><SectionIcon />구역<Chevron /></RowButton>
      </Stack>
    </Group>
    <Group w={312} caption="글꼴" launcher pad={8}>
      <Lines>
        <Line>
          <Line $gap={2}>
            <Combo $w={164}>
              <select aria-label="글꼴"><option>맑은 고딕</option></select>
              <Chevron />
            </Combo>
            <Combo $w={50}>
              <select aria-label="글꼴 크기"><option>18</option></select>
              <Chevron />
            </Combo>
          </Line>
          <ToolButton aria-label="글꼴 크기 크게">
            <MarkedGlyph><Glyph $kind="large">가</Glyph><UpMark /></MarkedGlyph>
          </ToolButton>
          <ToolButton aria-label="글꼴 크기 작게">
            <MarkedGlyph><Glyph>가</Glyph><DownMark /></MarkedGlyph>
          </ToolButton>
          <LineRule />
          <ToolButton aria-label="모든 서식 지우기">
            <ErasedGlyph><Glyph $kind="large">가</Glyph><Eraser /></ErasedGlyph>
          </ToolButton>
        </Line>
        <Line>
          <ToolButton aria-label="굵게"><Glyph $kind="bold">가</Glyph></ToolButton>
          <ToolButton aria-label="기울임꼴"><Glyph $kind="italic">가</Glyph></ToolButton>
          <ToolButton aria-label="밑줄"><Glyph $kind="under">가</Glyph></ToolButton>
          <ToolButton aria-label="그림자"><Glyph $kind="shadow">S</Glyph></ToolButton>
          <ToolButton aria-label="취소선"><Glyph $kind="strike">가나</Glyph></ToolButton>
          <Split label="문자 간격" after={6}>
            <StackedGlyph><TinyGlyph $strong>가나</TinyGlyph><SpreadArrow /></StackedGlyph>
          </Split>
          <Split label="대/소문자 바꾸기" after={8}><TinyGlyph>가가</TinyGlyph></Split>
          <LineRule />
          <Split label="텍스트 강조 색" after={6}><HighlightIcon /></Split>
          <Split label="글꼴 색">
            <StackedGlyph><Glyph $kind="bold">가</Glyph><InkBar /></StackedGlyph>
          </Split>
        </Line>
      </Lines>
    </Group>
    <Group w={231} caption="단락" launcher pad={6}>
      <Lines>
        <Line>
          <Split label="글머리 기호" slot={12} after={3}><BulletIcon /></Split>
          <Split label="번호 매기기" slot={12} after={4}><NumberIcon /></Split>
          <ToolButton aria-label="목록 수준 줄임"><IndentIcon out /></ToolButton>
          <ToolButton aria-label="목록 수준 늘림"><IndentIcon /></ToolButton>
          <Split label="줄 간격"><SpacingIcon /></Split>
        </Line>
        <Line>
          <ToolButton aria-label="왼쪽 맞춤"><AlignIcon kind="left" /></ToolButton>
          <ToolButton $selected aria-label="가운데 맞춤"><AlignIcon kind="center" /></ToolButton>
          <ToolButton aria-label="오른쪽 맞춤"><AlignIcon kind="right" /></ToolButton>
          <ToolButton aria-label="양쪽 맞춤"><AlignIcon kind="full" /></ToolButton>
          <ToolButton aria-label="균등 분할"><DistributeIcon /></ToolButton>
          <LineRule $gap={1} />
          <Split label="열"><ColumnsIcon /></Split>
        </Line>
      </Lines>
      <Stack $left={8}>
        <RowButton aria-label="텍스트 방향">
          <IconSplit>
            <DirectionBox><DirectionArrows /><span>가</span></DirectionBox>
            <Chevron />
          </IconSplit>
        </RowButton>
        <RowButton aria-label="텍스트 맞춤"><IconSplit><AlignTextIcon /><Chevron /></IconSplit></RowButton>
        <RowButton aria-label="SmartArt로 변환"><IconSplit><SmartArtIcon /><Chevron /></IconSplit></RowButton>
      </Stack>
    </Group>
    <Group w={263} caption="그리기" launcher pad={7}>
      <BigButton $w={44}><ShapesIcon /><BigCaption>도형<Chevron /></BigCaption></BigButton>
      <BigButton $w={44}><ArrangeIcon /><BigCaption>정렬<Chevron /></BigCaption></BigButton>
      <BigButton $w={54}>
        <QuickStyleIcon />
        <TwoLineCaption>{"빠른\n스타일"}<Chevron /></TwoLineCaption>
      </BigButton>
      <Stack $left={6}>
        <RowButton><FillIcon />도형 채우기<Chevron /></RowButton>
        <RowButton><OutlineIcon />도형 윤곽선<Chevron /></RowButton>
        <RowButton><EffectIcon />도형 효과<Chevron /></RowButton>
      </Stack>
    </Group>
    <Group w={108} caption="편집" pad={12}>
      <Stack>
        <RowButton><SearchIcon />찾기</RowButton>
        <RowButton>
          <ReplaceIconBox aria-hidden="true"><b>가</b><ReplaceArrow /><em>나</em></ReplaceIconBox>
          바꾸기
          <WideGap />
          <Chevron />
        </RowButton>
        <RowButton><PointerIcon />선택<Chevron /></RowButton>
      </Stack>
    </Group>
    <Group w={58} caption="추가 기능">
      <BigButton $w={58}>
        <AddInIcon />
        <TwoLineCaption>{"추가\n기능"}</TwoLineCaption>
      </BigButton>
    </Group>
    <CollapseCell>
      <button aria-label="리본 축소"><Chevron size={12} /></button>
    </CollapseCell>
  </Ribbon>
);

export default function App() {
  return (
    <>
      <GlobalStyle />
      <AppWindow>
        <TitleBar>
          <QuickAccess>
            <LogoIcon />
            <AutoSave>
              자동 저장
              <Toggle>
                <input type="checkbox" />끔
              </Toggle>
            </AutoSave>
            <BareButton $w={18} aria-label="저장"><SaveIcon /></BareButton>
            <UndoGroup>
              <BareButton $w={18} aria-label="실행 취소"><UndoIcon /></BareButton>
              <BareButton $w={8} aria-label="실행 취소 목록"><Chevron /></BareButton>
            </UndoGroup>
            <BareButton $w={18} aria-label="다시 실행"><UndoIcon flip /></BareButton>
            <BareButton $w={18} aria-label="처음부터 시작"><PresentIcon /></BareButton>
            <BareButton $w={18} aria-label="빠른 실행 도구 모음"><MoreIcon /></BareButton>
          </QuickAccess>
          <DocTitle>
            <span>파워포인트 템플릿 원본 파일 다운로드 받기 free ppt template 1... • 이 PC에 저장됨</span>
            <Chevron size={12} />
          </DocTitle>
          <SearchBox>
            <SearchIcon />
            <input type="search" placeholder="검색" aria-label="검색" />
          </SearchBox>
          <Avatar aria-label="계정"><PersonIcon /></Avatar>
          <BareButton $w={48} aria-label="최소화"><MinimizeIcon /></BareButton>
          <BareButton $w={48} aria-label="최대화"><MaximizeIcon /></BareButton>
          <BareButton $w={48} aria-label="닫기"><CloseIcon /></BareButton>
        </TitleBar>
        <TabRow>
          <TabList>
            {tabs.map((t) => (
              <Tab key={t.name} $w={t.w} $active={t.active} $accent={t.accent}>
                {t.name}
              </Tab>
            ))}
          </TabList>
          <TabActions>
            <ActionButton $w={85}><RecordIcon />녹음/녹화</ActionButton>
            <ActionButton $w={22} aria-label="메모"><CommentIcon /></ActionButton>
            <ActionButton $w={64} $primary><ShareIcon />공유<Chevron color="#fff" /></ActionButton>
          </TabActions>
        </TabRow>
        <HomeRibbon />
        <Workspace>
          <ThumbRail>
            <button aria-label="축소판 열기"><ChevronRight /></button>
            <RailText>축소판 그림</RailText>
          </ThumbRail>
          <EditorGrid>
            <Canvas>
              <Slide>
                <BluePanel />
                <SwitchTrack />
                <SwitchKnob />
                <SelectionFrame />
                <Note $top={358}>얘도 안쪽 그림자.</Note>
                <Note $top={423}>원 도형은 오렌지 채우기 + 흰색 테두리 선</Note>
              </Slide>
            </Canvas>
            <VBar>
              <VTrack>
                <Triangle dir="up" />
                <VThumb />
                <Triangle dir="down" />
              </VTrack>
              <DoubleArrow />
              <DoubleArrow down />
            </VBar>
            <HTrack>
              <Triangle dir="left" />
              <HThumb />
              <Triangle dir="right" />
            </HTrack>
          </EditorGrid>
          <FormatPanel />
        </Workspace>
        <StatusStrip />
      </AppWindow>
    </>
  );
}
